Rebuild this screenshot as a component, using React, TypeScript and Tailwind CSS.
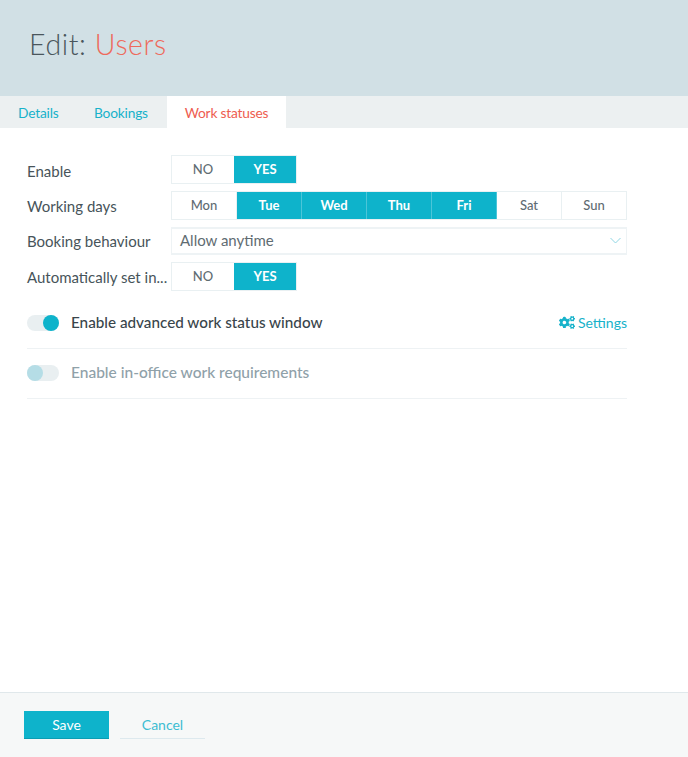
import React from "react";
import { FaCogs } from "react-icons/fa";

const days = [
  { name: "Mon", on: false },
  { name: "Tue", on: true },
  { name: "Wed", on: true },
  { name: "Thu", on: true },
  { name: "Fri", on: true },
  { name: "Sat", on: false },
  { name: "Sun", on: false },
];

const Label = ({ children, top }: { children: React.ReactNode; top: string }) => (
  <div className={`w-[144px] shrink-0 whitespace-nowrap text-[15px] leading-5 text-[#47545a] ${top}`}>{children}</div>
);

const YesNo = () => (
  <div className="flex h-[29px] w-[126px] border border-[#e9f0f2] text-[13px]">
    <div className="flex w-[62px] items-center justify-center font-medium text-[#5f6c72]">NO</div>
    <div className="flex flex-1 items-center justify-center bg-[#0eb3cb] font-bold text-white">YES</div>
  </div>
);

const Toggle = ({ on, disabled }: { on?: boolean; disabled?: boolean }) => (
  <div className={`flex h-4 w-8 shrink-0 items-center rounded-full bg-[#e9eff1] ${on ? "justify-end" : "justify-start"}`}>
    <div className={`h-4 w-4 rounded-full ${disabled ? "bg-[#b5dde6]" : "bg-[#0eb3cb]"}`} />
  </div>
);

export default function App() {
  return (
    <div className="flex h-[757px] w-[688px] flex-col bg-white font-['Lato',sans-serif]">
      <div className="flex h-[96px] shrink-0 items-center bg-[#d1e0e5] pl-[29px] pb-[8px] text-[28.5px] font-light tracking-[0.6px]">
        <span className="text-[#4a565c]">Edit:&nbsp;</span>
        <span className="text-[#ee6a5c]">Users</span>
      </div>

      <div className="flex h-8 shrink-0 bg-[#ecf0f1] text-[13.75px] tracking-[-0.2px]">
        <div className="flex w-[76px] items-center pl-[18px] pt-[2px] text-[#17b2ca]">Details</div>
        <div className="flex w-[91px] items-center pl-[18px] pt-[2px] text-[#17b2ca]">Bookings</div>
        <div className="flex w-[119px] items-center justify-center bg-white pt-[2px] text-[#ee5d50]">Work statuses</div>
      </div>

      <div className="flex flex-1 flex-col pl-[27px] pr-[61px] pt-[27px]">
        <div className="flex h-[29px] items-start">
          <Label top="pt-[6px]">Enable</Label>
          <YesNo />
        </div>

        <div className="mt-[7px] flex h-[29px] items-start">
          <Label top="pt-[5px]">Working days</Label>
          <div className="flex h-[29px] flex-1 border border-[#e9f0f2] text-[13px]">
            {days.map((d) => (
              <div
                key={d.name}
                className={`flex flex-1 items-center justify-center border-r last:border-r-0 ${
                  d.on
                    ? "border-[#4cc5d8] bg-[#0eb3cb] font-bold text-white"
                    : "border-[#e9f0f2] font-medium text-[#5f6c72]"
                }`}
              >
                {d.name}
              </div>
            ))}
          </div>
        </div>

        <div className="mt-[7px] flex h-[28px] items-start">
          <Label top="pt-[4px]">Booking behaviour</Label>
          <div className="flex h-[28px] flex-1 items-center justify-between border-x border-y-2 border-[#eef3f5] pb-[2px] pl-2 pr-[5px] text-[15px] text-[#5f6c72]">
            <span>Allow anytime</span>
            <svg width="11" height="7" viewBox="0 0 11 7" fill="none" stroke="#8fd6e4" strokeWidth="1">
              <path d="M0.5 1 L5.5 6 L10.5 1" />
            </svg>
          </div>
        </div>

        <div className="mt-[7px] flex h-[29px] items-start">
          <Label top="pt-[5px]">Automatically set in...</Label>
          <YesNo />
        </div>

        <div className="mt-[16px] flex h-[42px] items-center border-b border-[#eef2f4] pb-[10px]">
          <Toggle on />
          <div className="ml-[12px] text-[15.25px] font-medium text-[#39454b]">Enable advanced work status window</div>
          <div className="ml-auto flex items-center gap-[3px] text-[14px] text-[#17b2ca]">
            <FaCogs className="h-[15px] w-[16px]" />
            <span>Settings</span>
          </div>
        </div>

        <div className="flex h-[50px] items-center border-b border-[#eef2f4] pb-[1px]">
          <Toggle disabled />
          <div className="ml-[12px] text-[15.5px] font-medium text-[#8fa1a9]">Enable in-office work requirements</div>
        </div>
      </div>

      <div className="flex h-[65px] shrink-0 items-start border-t border-[#e0e8eb] bg-[#f6f8f8] pl-[24px] pt-[18px]">
        <div className="flex h-[28px] w-[85px] items-center justify-center border-b border-[#0a9db3] bg-[#0eb3cb] text-[14px] text-white">
          Save
        </div>
        <div className="ml-[11px] flex h-[28px] w-[85px] items-center justify-center border-b border-[#dde9ee] text-[14px] text-[#3dbdd2]">
          Cancel
        </div>
      </div>
    </div>
  );
}
